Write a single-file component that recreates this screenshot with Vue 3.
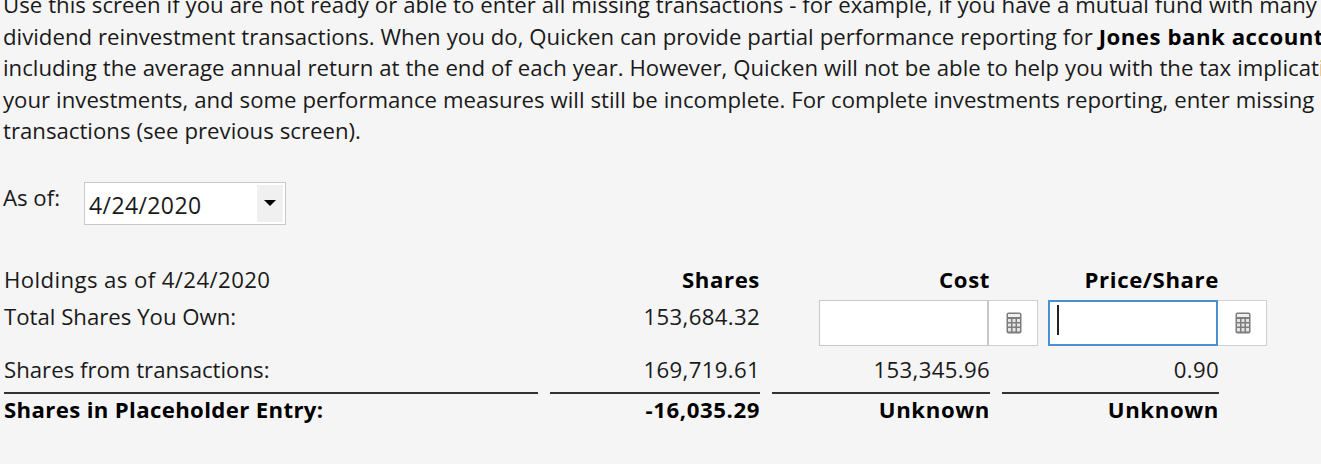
<script setup>
const intro = [
  ["Use this screen if you are not ready or able to enter all missing transactions - for example, if you have a mutual fund with many"],
  ["dividend reinvestment transactions. When you do, Quicken can provide partial performance reporting for ", "Jones bank account,"],
  ["including the average annual return at the end of each year. However, Quicken will not be able to help you with the tax implications of"],
  ["your investments, and some performance measures will still be incomplete. For complete investments reporting, enter missing"],
  ["transactions (see previous screen)."],
];
</script>

<template>
  <div class="screen">
    <div class="intro">
      <div v-for="(line, i) in intro" :key="i" class="intro-line">
        {{ line[0] }}<b v-if="line[1]">{{ line[1] }}</b>
      </div>
    </div>

    <div class="as-of">
      <span class="as-of-label">As of:</span>
      <div class="date-box">
        <span class="date-value">4/24/2020</span>
        <span class="date-btn"><i class="caret"></i></span>
      </div>
    </div>

    <div class="holdings">
      <div class="row row-head">
        <span class="label heading">Holdings as of 4/24/2020</span>
        <b class="num">Shares</b>
        <b class="num">Cost</b>
        <b class="num">Price/Share</b>
      </div>

      <div class="row-own">
        <span class="label">Total Shares You Own:</span>
        <span class="num own-shares">153,684.32</span>
        <div class="field field-cost">
          <div class="field-input"></div>
          <div class="calc-btn">
            <svg width="16" height="22" viewBox="0 0 16 22">
              <rect x="0.5" y="0.5" width="15" height="21" rx="2" fill="#7d7d7d" />
              <rect x="2" y="2" width="12" height="3" fill="#f0f0f0" />
              <path d="M2 7h3v3H2zM6.5 7h3v3h-3zM11 7h3v3h-3zM2 11.5h3v3H2zM6.5 11.5h3v3h-3zM11 11.5h3v3h-3zM2 16h3v3.5H2zM6.5 16h3v3.5h-3zM11 16h3v3.5h-3z" fill="#e4e4e4" />
            </svg>
          </div>
        </div>
        <div class="field field-price">
          <div class="field-input focused"><i class="cursor"></i></div>
          <div class="calc-btn">
            <svg width="16" height="22" viewBox="0 0 16 22">
              <rect x="0.5" y="0.5" width="15" height="21" rx="2" fill="#7d7d7d" />
              <rect x="2" y="2" width="12" height="3" fill="#f0f0f0" />
              <path d="M2 7h3v3H2zM6.5 7h3v3h-3zM11 7h3v3h-3zM2 11.5h3v3H2zM6.5 11.5h3v3h-3zM11 11.5h3v3h-3zM2 16h3v3.5H2zM6.5 16h3v3.5h-3zM11 16h3v3.5h-3z" fill="#e4e4e4" />
            </svg>
          </div>
        </div>
      </div>

      <div class="row row-tx">
        <span class="label">Shares from transactions:</span>
        <span class="num">169,719.61</span>
        <span class="num">153,345.96</span>
        <span class="num">0.90</span>
      </div>

      <div class="row row-total">
        <b class="label">Shares in Placeholder Entry:</b>
        <b class="num">-16,035.29</b>
        <b class="num">Unknown</b>
        <b class="num">Unknown</b>
      </div>
    </div>
  </div>
</template>

<style>
html,
body {
  margin: 0;
  background: #f5f5f5;
  overflow: hidden;
}
</style>

<style scoped>
.screen {
  width: 1321px;
  height: 464px;
  overflow: hidden;
  background: #f5f5f5;
  color: #1a1a1a;
  font-family: "Open Sans", "Noto Sans", sans-serif;
  font-size: 22.2px;
}

b {
  font-weight: 700;
  color: #000;
}

.intro {
  margin-top: -11px;
  padding-left: 3px;
}

.intro-line {
  height: 31.6px;
  line-height: 32px;
  white-space: nowrap;
  word-spacing: 0.2px;
}

.intro-line b {
  letter-spacing: 0.5px;
}

.as-of {
  display: flex;
  align-items: flex-start;
  margin-top: 35px;
  padding-left: 3px;
}

.as-of-label {
  width: 81px;
  line-height: 32px;
}

.date-box {
  display: flex;
  justify-content: space-between;
  box-sizing: border-box;
  width: 202px;
  height: 43px;
  padding: 2px;
  background: #fff;
  border: 1px solid #c8c8c8;
}

.date-value {
  padding-left: 2px;
  line-height: 41px;
  font-size: 23px;
  letter-spacing: 0.4px;
}

.date-btn {
  display: flex;
  align-items: center;
  justify-content: center;
  width: 26px;
  background: #f0f0f0;
}

.caret {
  width: 0;
  height: 0;
  border-left: 6px solid transparent;
  border-right: 6px solid transparent;
  border-top: 6px solid #000;
}

.holdings {
  margin-top: 39px;
  padding-left: 4px;
}

.row {
  display: grid;
  grid-template-columns: 534px 210px 218px 217px;
  column-gap: 12px;
  width: 1215px;
  line-height: 32px;
}

.row > span,
.row > b {
  display: block;
}

.num,
b.label {
  letter-spacing: 0.35px;
  text-align: right;
}

b.num {
  letter-spacing: 0.6px;
}

b.label {
  text-align: left;
}

.heading {
  letter-spacing: 0.4px;
}

.row-head {
  height: 32px;
}

.row-own {
  display: flex;
  align-items: flex-start;
  height: 54px;
  margin-top: 4px;
  line-height: 34px;
}

.row-own .label {
  width: 546px;
}

.own-shares {
  width: 210px;
}

.field {
  display: flex;
  height: 46px;
}

.field-cost {
  margin-left: 59px;
}

.field-price {
  margin-left: 10px;
}

.field-input {
  box-sizing: border-box;
  width: 170px;
  height: 46px;
  background: #fff;
  border: 1px solid #c8c8c8;
  border-right-width: 2px;
}

.field-input.focused {
  position: relative;
  border: 2px solid #4a8fd0;
}

.cursor {
  position: absolute;
  left: 7px;
  top: 3px;
  width: 2px;
  height: 30px;
  background: #222;
}

.calc-btn {
  display: flex;
  align-items: center;
  justify-content: center;
  box-sizing: border-box;
  width: 49px;
  height: 46px;
  padding-left: 2px;
  background: #fff;
  border: 1px solid #d0d0d0;
  border-left: none;
}

.row-tx {
  height: 32px;
}

.row-tx > span {
  border-bottom: 2px solid #333;
  height: 38px;
}

.row-total {
  margin-top: 8px;
}
</style>
